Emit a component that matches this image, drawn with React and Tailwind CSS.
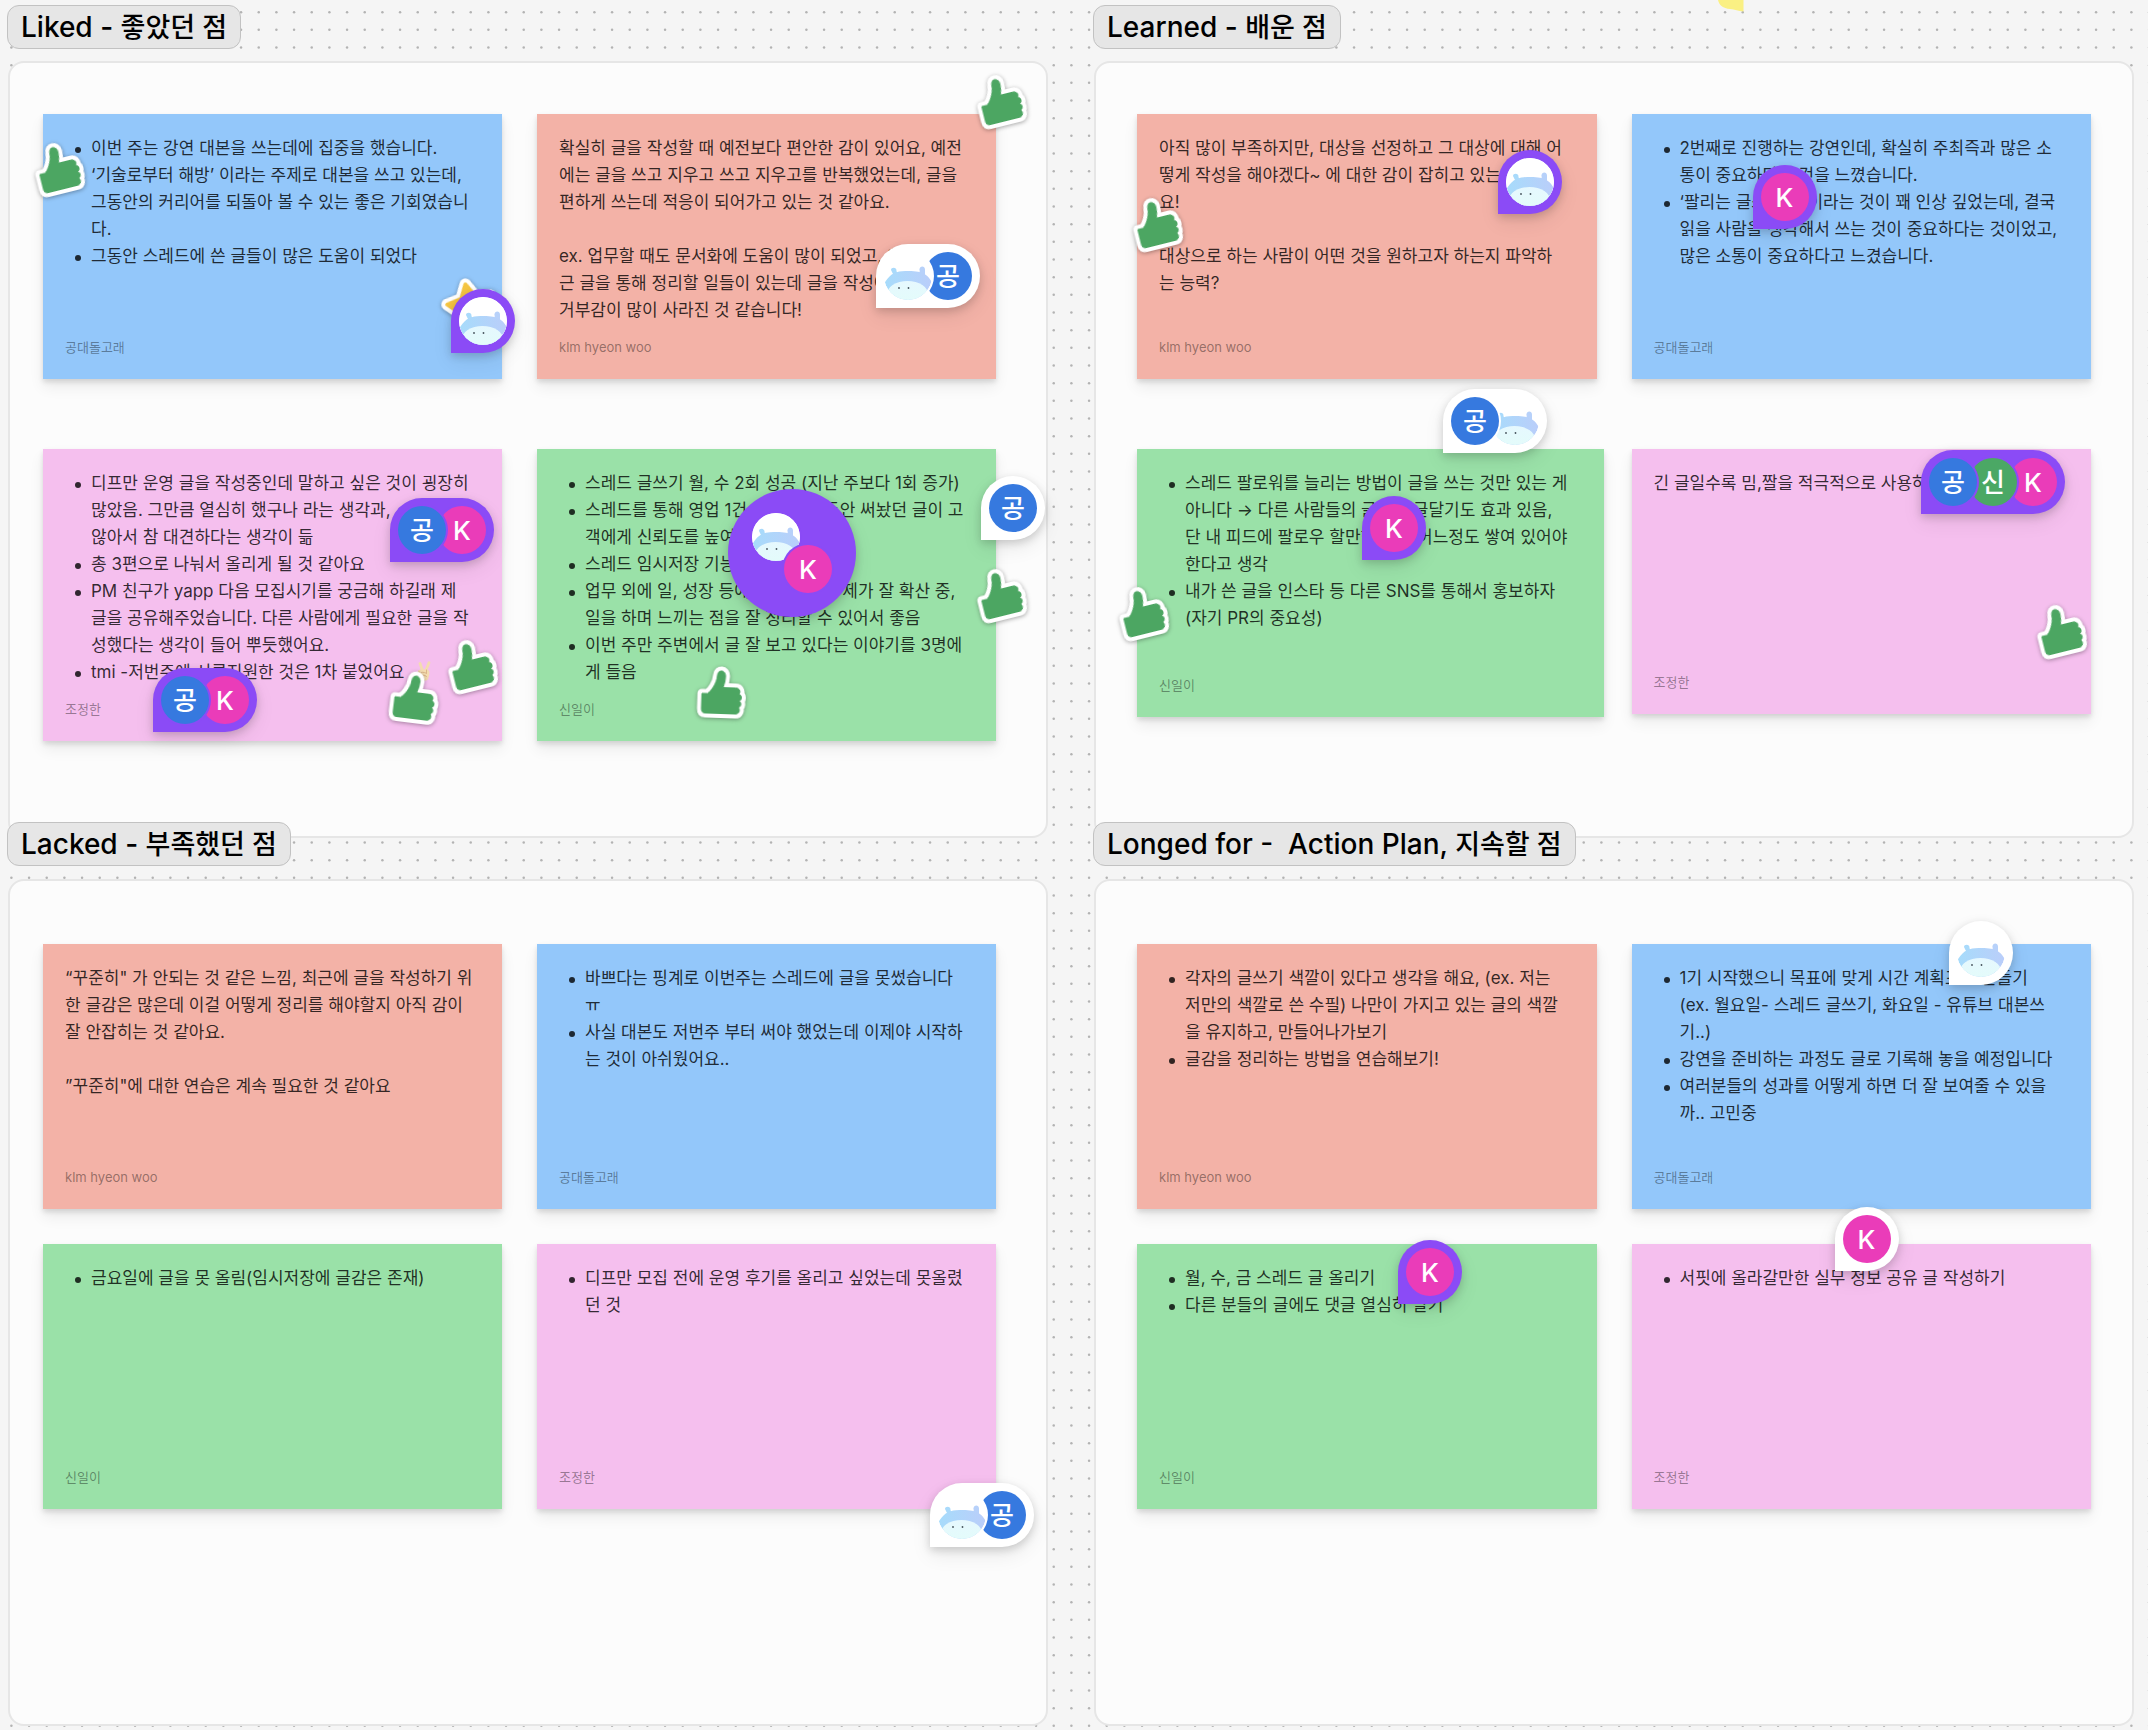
import React from "react";

const NOTE_COLORS = {
  blue: "bg-[#93c7fa]",
  coral: "bg-[#f3b2a7]",
  pink: "bg-[#f5bfee]",
  green: "bg-[#9ae1a8]",
};

function VictoryHand() {
  return (
    <svg viewBox="0 0 16 20" className="ml-3 inline-block h-5 w-4 align-[-3px]" role="img" aria-label="✌">
      <path d="M4 2.500 6.500 9.500 M13 1.800 9.800 9.500" stroke="#f4dcb0" strokeWidth="2.800" strokeLinecap="round" />
      <path d="M1.500 12c0-2 1.400-3.200 3.500-3.400l5.500-.2c2.300.2 3.300 1.800 3 4l-1.200 5c-.4 1.400-1.400 2-3 2H6.200c-1.400 0-2.200-.8-2.600-2z" fill="#f4dcb0" />
      <path d="M3.500 12.500c1.500-1.600 4.500-1.600 7-.2 M6.500 14.500c2-.6 3.500 0 4 1.200 M2.800 10.200l1.400 3 M10.500 9v3" stroke="#d9b184" strokeWidth=".9" fill="none" strokeLinecap="round" />
    </svg>
  );
}

function Hippo() {
  const id = React.useId();
  return (
    <svg viewBox="0 0 48 48" className="size-12" aria-hidden="true">
      <defs>
        <clipPath id={id + "c"}>
          <circle cx="24" cy="24" r="24" />
        </clipPath>
        <linearGradient id={id + "h"} x1="0" x2="1">
          <stop offset="0" stopColor="#a6dcfb" />
          <stop offset="1" stopColor="#bbcdfa" />
        </linearGradient>
        <linearGradient id={id + "m"} x1="0" x2="0" y1="0" y2="1">
          <stop offset="0" stopColor="#e6f8fe" />
          <stop offset="1" stopColor="#e2fdf9" />
        </linearGradient>
      </defs>
      <g clipPath={`url(#${id}c)`}>
        <rect width="48" height="48" fill="#fff" />
        <path d="M7 18c0-3 6-3 5.500 1l1.500 5H10z" fill="#a9dafb" />
        <path d="M35.500 17.500c0-4 5.500-4 5.500 0L41 25h-5z" fill="#b7d1fa" />
        <path d="M-1 35C3 24 10 19.500 18 19.200c6-.4 12-.4 16 .6C42 21 46 26 50 34V48H-1z" fill={`url(#${id}h)`} />
        <ellipse cx="23.500" cy="43" rx="21" ry="14" fill={`url(#${id}m)`} />
        <circle cx="15" cy="36" r=".9" fill="#46535c" />
        <circle cx="24.500" cy="36" r=".9" fill="#46535c" />
      </g>
    </svg>
  );
}

const PEOPLE = {
  dolphin: { label: "공", bg: "bg-[#3679df]" },
  shin: { label: "신", bg: "bg-[#4ba865]" },
  k: { label: "K", bg: "bg-[#ea3cb9]" },
};

const RINGS = {
  purple: "shadow-[0_0_0_2px_#8b4bf6]",
  white: "shadow-[0_0_0_2px_#ffffff]",
};

const STACK = ["z-30", "z-20", "z-10"];

function Avatar({ who, tone, layer = 0, className = "" }) {
  const person = PEOPLE[who];
  return (
    <span
      className={`relative flex size-12 shrink-0 items-center justify-center overflow-hidden rounded-full text-[26px] font-medium text-white ${
        person ? person.bg : "bg-white"
      } ${RINGS[tone]} ${STACK[layer]} ${className}`}
    >
      {person ? person.label : <Hippo />}
    </span>
  );
}

function Comment({ people, tone = "purple", at }) {
  return (
    <button
      type="button"
      aria-label="댓글"
      className={`absolute z-20 flex rounded-full rounded-bl-none p-2 shadow-[0_3px_8px_rgba(0,0,0,0.16),0_8px_20px_rgba(0,0,0,0.08)] ${
        tone === "purple" ? "bg-[#8b4bf6]" : "bg-white"
      } ${at}`}
    >
      {people.map((who, i) => (
        <Avatar key={who} who={who} tone={tone} layer={i} className={i > 0 ? "-ml-2" : ""} />
      ))}
    </button>
  );
}

function Cluster({ at }) {
  return (
    <button
      type="button"
      aria-label="댓글 모음"
      className={`absolute z-20 size-32 rounded-full bg-[#8b4bf6] p-6 shadow-[0_3px_8px_rgba(0,0,0,0.16),0_8px_20px_rgba(0,0,0,0.08)] ${at}`}
    >
      <Avatar who="hippo" tone="purple" />
      <Avatar who="k" tone="purple" className="-mt-4 ml-8" />
    </button>
  );
}

const THUMB =
  "M5 28H10.500C14 25.500 19.500 18 20 9C20.300 3.500 27.800 3.500 28 10C28 14.500 27 18 25.800 21.500H38.500C43 21.500 44 26 41.800 27.500C45.500 28.500 45.300 33.500 42.300 34.500C45 35.500 44.800 40 41.800 41C44 43 43 47.500 39 47.500H9C6 47.500 5 46 5 43Z";

function Thumb({ at }) {
  return (
    <svg
      viewBox="0 0 48 54"
      className={`absolute z-10 h-[54px] w-12 overflow-visible drop-shadow-[0_1px_2px_rgba(0,0,0,0.35)] ${at}`}
      role="img"
      aria-label="좋아요"
    >
      <path d={THUMB} fill="#fff" stroke="#fff" strokeWidth="9" strokeLinejoin="round" />
      <path d={THUMB} fill="#4ca662" stroke="#4ca662" strokeWidth="1" strokeLinejoin="round" />
    </svg>
  );
}

function Star({ at }) {
  const d = "M28 6 35 19.300 49.900 21.900 39.400 32.700 41.500 47.600 28 41 14.500 47.600 16.600 32.700 6.100 21.900 21 19.300Z";
  return (
    <svg
      viewBox="0 0 56 56"
      className={`absolute z-10 size-14 -rotate-12 overflow-visible drop-shadow-[0_1px_2px_rgba(0,0,0,0.35)] ${at}`}
      role="img"
      aria-label="별"
    >
      <path d={d} fill="#fff" stroke="#fff" strokeWidth="12" strokeLinejoin="round" />
      <path d={d} fill="#f5c542" stroke="#f5c542" strokeWidth="4" strokeLinejoin="round" />
    </svg>
  );
}

function Note({ color, author, items, text, size = "min-h-[265px]", children }) {
  return (
    <article
      className={`relative flex flex-col px-[22px] pt-[21px] pb-[22px] shadow-[0_3px_5px_rgba(0,0,0,0.12),0_8px_14px_rgba(0,0,0,0.07)] ${NOTE_COLORS[color]} ${size}`}
    >
      {items && (
        <ul className="flex-1 text-[17px] leading-[27px] whitespace-pre text-black/80">
          {items.map((item, i) => (
            <li key={i} className="flex">
              <span className="mx-[10px] mt-3 size-[6px] shrink-0 rounded-full bg-black/80" />
              <div>{item}</div>
            </li>
          ))}
        </ul>
      )}
      {text && <p className="flex-1 text-[17px] leading-[27px] whitespace-pre text-black/80">{text}</p>}
      <footer className="text-[13px] leading-5 text-black/40">{author}</footer>
      {children}
    </article>
  );
}

function Section({ title, korean, className = "", panel, children }) {
  return (
    <section className={`flex flex-col items-start ${className}`}>
      <h2 className="relative z-10 mb-3 -ml-px h-11 rounded-xl border border-[#c2c2c2] bg-[#e6e6e6] px-[13px] text-[28px] leading-[42px] font-medium whitespace-pre text-black">
        {title} <span className="text-[27px]">{korean}</span>
      </h2>
      <div
        className={`grid w-full flex-1 grid-cols-2 content-start items-start gap-x-[35px] rounded-2xl border-2 border-[#e6e6e6] bg-[#fcfcfc] ${panel}`}
      >
        {children}
      </div>
    </section>
  );
}

function DotGrid() {
  const steps = [11.4, 29.06, 46.73];
  return (
    <svg className="absolute inset-0 size-full" aria-hidden="true">
      <defs>
        <pattern id="dots" width="53" height="53" patternUnits="userSpaceOnUse">
          {steps.map((x) => steps.map((y) => <circle key={x + "-" + y} cx={x} cy={y + 0.8} r="1.25" fill="#b3b3b3" />))}
        </pattern>
      </defs>
      <rect width="100%" height="100%" fill="url(#dots)" />
    </svg>
  );
}

export default function App() {
  return (
    <main
      lang="ko"
      className="relative isolate min-h-screen overflow-hidden bg-[#f5f5f5] font-['Inter','Noto_Sans_CJK_KR',sans-serif]"
    >
      <DotGrid />
      <svg viewBox="0 0 26 12" className="absolute top-0 left-[80%] h-3 w-[26px]" aria-hidden="true">
        <path d="M0 0C1 5 5 8.500 12 9C17 9.300 20 11 25.500 11.500V0Z" fill="#faf083" />
      </svg>

      <div className="relative grid grid-cols-2 gap-x-[46px] pt-[5px] pr-[14px] pb-1 pl-2">
        <Section title="Liked -" korean="좋았던 점" panel="gap-y-[70px] pt-[51px] pr-[50px] pb-[95px] pl-[33px]">
          <Note
            color="blue"
            author="공대돌고래"
            items={[
              "이번 주는 강연 대본을 쓰는데에 집중을 했습니다.\n‘기술로부터 해방’ 이라는 주제로 대본을 쓰고 있는데,\n그동안의 커리어를 되돌아 볼 수 있는 좋은 기회였습니\n다.",
              "그동안 스레드에 쓴 글들이 많은 도움이 되었다",
            ]}
          >
            <Thumb at="top-7 -left-[9px] -rotate-[14deg]" />
            <Star at="top-[164px] right-1" />
            <Comment people={["hippo"]} at="top-[175px] -right-[13px]" />
          </Note>
          <Note
            color="coral"
            author="klm hyeon woo"
            text={
              "확실히 글을 작성할 때 예전보다 편안한 감이 있어요, 예전\n에는 글을 쓰고 지우고 쓰고 지우고를 반복했었는데, 글을\n편하게 쓰는데 적응이 되어가고 있는 것 같아요.\n\nex. 업무할 때도 문서화에 도움이 많이 되었고, 최\n근 글을 통해 정리할 일들이 있는데 글을 작성에\n거부감이 많이 사라진 것 같습니다!"
            }
          >
            <Thumb at="-top-10 -right-7 -rotate-[14deg]" />
            <Comment people={["hippo", "dolphin"]} tone="white" at="top-[130px] right-4" />
          </Note>
          <Note
            color="pink"
            author="조정한"
            size="min-h-[292px]"
            items={[
              "디프만 운영 글을 작성중인데 말하고 싶은 것이 굉장히\n많았음. 그만큼 열심히 했구나 라는 생각과,\n않아서 참 대견하다는 생각이 듦",
              "총 3편으로 나눠서 올리게 될 것 같아요",
              "PM 친구가 yapp 다음 모집시기를 궁금해 하길래 제\n글을 공유해주었습니다. 다른 사람에게 필요한 글을 작\n성했다는 생각이 들어 뿌듯했어요.",
              <>
                tmi -저번주에 서류지원한 것은 1차 붙었어요
                <VictoryHand />
              </>,
            ]}
          >
            <Comment people={["dolphin", "k"]} at="top-[49px] right-2" />
            <Comment people={["dolphin", "k"]} at="top-[219px] left-[110px]" />
            <Thumb at="top-[190px] right-[7px] -rotate-[14deg]" />
            <Thumb at="top-[222px] right-16 rotate-[7deg]" />
          </Note>
          <Note
            color="green"
            author="신일이"
            size="min-h-[292px]"
            items={[
              "스레드 글쓰기 월, 수 2회 성공 (지난 주보다 1회 증가)",
              "스레드를 통해 영업 1건 성공함, 그동안 써놨던 글이 고\n객에게 신뢰도를 높여줌",
              "스레드 임시저장 기능 활용",
              "업무 외에 일, 성장 등에 대한 여러 주제가 잘 확산 중,\n일을 하며 느끼는 점을 잘 정리할 수 있어서 좋음",
              "이번 주만 주변에서 글 잘 보고 있다는 이야기를 3명에\n게 들음",
            ]}
          >
            <Cluster at="top-10 left-[191px]" />
            <Comment people={["dolphin"]} tone="white" at="top-[27px] -right-[49px]" />
            <Thumb at="top-[119px] -right-7 -rotate-[14deg]" />
            <Thumb at="top-[217px] left-40 rotate-2" />
          </Note>
        </Section>

        <Section title="Learned -" korean="배운 점" panel="gap-y-[70px] px-[41px] pt-[51px] pb-[95px]">
          <Note
            color="coral"
            author="klm hyeon woo"
            text={
              "아직 많이 부족하지만, 대상을 선정하고 그 대상에 대해 어\n떻게 작성을 해야겠다~ 에 대한 감이 잡히고 있는 것 같아\n요!\n\n대상으로 하는 사람이 어떤 것을 원하고자 하는지 파악하\n는 능력?"
            }
          >
            <Comment people={["hippo"]} at="top-9 right-[35px]" />
            <Thumb at="top-[83px] -left-[5px] -rotate-[14deg]" />
          </Note>
          <Note
            color="blue"
            author="공대돌고래"
            items={[
              "2번째로 진행하는 강연인데, 확실히 주최즉과 많은 소\n통이 중요하다는 것을 느꼈습니다.",
              "‘팔리는 글쓰는법’ 이라는 것이 꽤 인상 깊었는데, 결국\n읽을 사람을 생각해서 쓰는 것이 중요하다는 것이었고,\n많은 소통이 중요하다고 느겼습니다.",
            ]}
          >
            <Comment people={["k"]} at="top-[51px] left-[121px]" />
          </Note>
          <Note
            color="green"
            author="신일이"
            size="-mr-[7px] min-h-[268px]"
            items={[
              "스레드 팔로워를 늘리는 방법이 글을 쓰는 것만 있는 게\n아니다 → 다른 사람들의 글에 댓글달기도 효과 있음,\n단 내 피드에 팔로우 할만한 글이 어느정도 쌓여 있어야\n한다고 생각",
              "내가 쓴 글을 인스타 등 다른 SNS를 통해서 홍보하자\n(자기 PR의 중요성)",
            ]}
          >
            <Comment people={["dolphin", "hippo"]} tone="white" at="-top-[60px] left-[306px]" />
            <Comment people={["k"]} at="top-[47px] left-[225px]" />
            <Thumb at="top-[137px] -left-[19px] -rotate-[14deg]" />
          </Note>
          <Note color="pink" author="조정한" text="긴 글일수록 밈,짤을 적극적으로 사용하기">
            <Comment people={["dolphin", "shin", "k"]} at="top-px right-[26px]" />
            <Thumb at="top-[155px] right-[7px] -rotate-[14deg]" />
          </Note>
        </Section>

        <Section
          title="Lacked -"
          korean="부족했던 점"
          className="-mt-4"
          panel="mt-px gap-y-[35px] pt-[63px] pr-[50px] pb-[215px] pl-[33px]"
        >
          <Note
            color="coral"
            author="klm hyeon woo"
            text={
              "“꾸준히\" 가 안되는 것 같은 느낌, 최근에 글을 작성하기 위\n한 글감은 많은데 이걸 어떻게 정리를 해야할지 아직 감이\n잘 안잡히는 것 같아요.\n\n”꾸준히\"에 대한 연습은 계속 필요한 것 같아요"
            }
          />
          <Note
            color="blue"
            author="공대돌고래"
            items={[
              "바쁘다는 핑계로 이번주는 스레드에 글을 못썼습니다\nㅠ",
              "사실 대본도 저번주 부터 써야 했었는데 이제야 시작하\n는 것이 아쉬웠어요..",
            ]}
          />
          <Note color="green" author="신일이" items={["금요일에 글을 못 올림(임시저장에 글감은 존재)"]} />
          <Note color="pink" author="조정한" items={["디프만 모집 전에 운영 후기를 올리고 싶었는데 못올렸\n던 것"]}>
            <Comment people={["hippo", "dolphin"]} tone="white" at="top-[239px] -right-[38px]" />
          </Note>
        </Section>

        <Section
          title="Longed for -  Action Plan,"
          korean="지속할 점"
          className="-mt-4"
          panel="mt-px gap-y-[35px] px-[41px] pt-[63px] pb-[215px]"
        >
          <Note
            color="coral"
            author="klm hyeon woo"
            items={[
              "각자의 글쓰기 색깔이 있다고 생각을 해요, (ex. 저는\n저만의 색깔로 쓴 수필) 나만이 가지고 있는 글의 색깔\n을 유지하고, 만들어나가보기",
              "글감을 정리하는 방법을 연습해보기!",
            ]}
          />
          <Note
            color="blue"
            author="공대돌고래"
            items={[
              "1기 시작했으니 목표에 맞게 시간 계획표를 만들기\n(ex. 월요일- 스레드 글쓰기, 화요일 - 유튜브 대본쓰\n기..)",
              "강연을 준비하는 과정도 글로 기록해 놓을 예정입니다",
              "여러분들의 성과를 어떻게 하면 더 잘 보여줄 수 있을\n까.. 고민중",
            ]}
          >
            <Comment people={["hippo"]} tone="white" at="-top-[23px] right-[78px]" />
          </Note>
          <Note color="green" author="신일이" items={["월, 수, 금 스레드 글 올리기", "다른 분들의 글에도 댓글 열심히 달기"]}>
            <Comment people={["k"]} at="-top-1 left-[261px]" />
          </Note>
          <Note color="pink" author="조정한" items={["서핏에 올라갈만한 실무 정보 공유 글 작성하기"]}>
            <Comment people={["k"]} tone="white" at="-top-[37px] left-[203px]" />
          </Note>
        </Section>
      </div>
    </main>
  );
}
